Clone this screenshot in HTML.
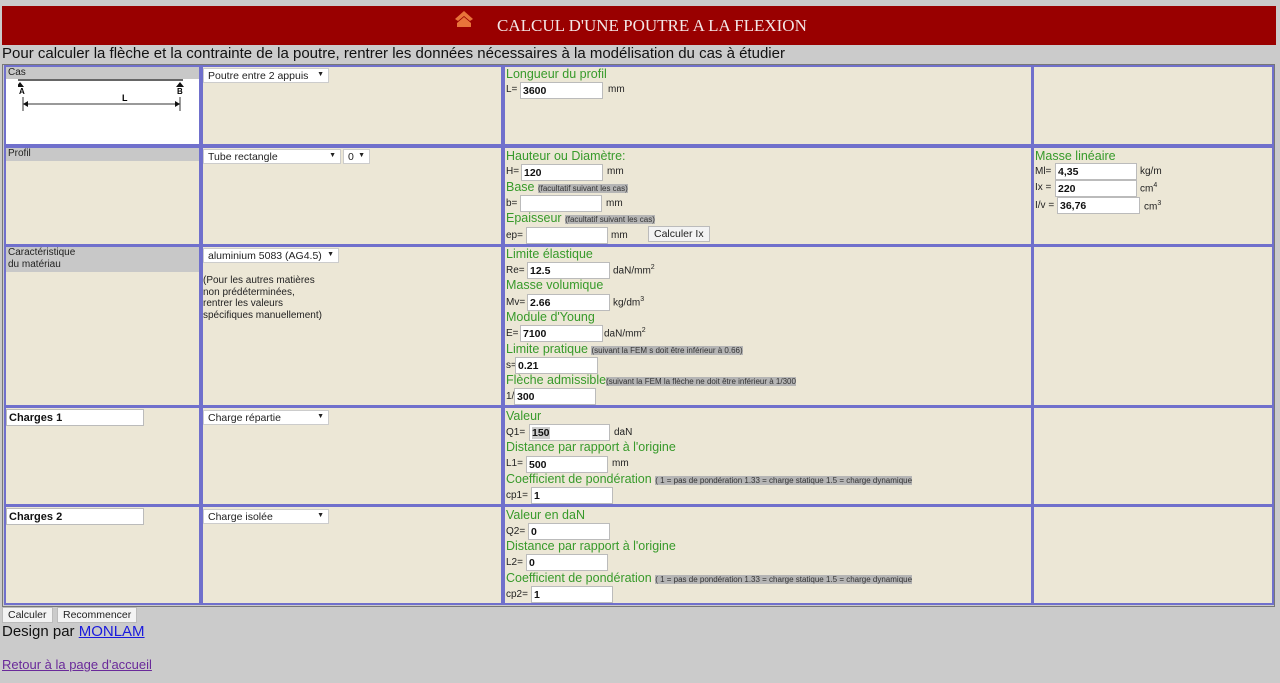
<!DOCTYPE html>
<html><head><meta charset="utf-8"><style>
*{box-sizing:border-box;margin:0;padding:0}
body{width:1280px;height:683px;background:#cbcbcb;font-family:"Liberation Sans",Arial,sans-serif;position:relative;overflow:hidden}
.a{position:absolute;white-space:nowrap}
.hdr{left:2px;top:6px;width:1274px;height:39px;background:#990000}
.ttl{left:497px;top:16px;font-family:"Liberation Serif",serif;font-size:17px;color:#f3e6e6}
.tbl{left:2px;top:64px;width:1273px;height:543px;border:1px solid #777;background:#cbcbcb}
.c{position:absolute;background:#ece7d6;border:2px solid #7070cc}
.g{font-size:12.5px;color:#379a2a}
.s{font-size:10px;color:#222}
.sm{font-size:8px;background:#b5b5b5;color:#333}
.in{position:absolute;height:17px;background:#fff;border:1px solid #bbb;font-size:10.5px;font-weight:bold;padding:2px 2px;color:#111}
.sel{position:absolute;height:15px;background:#fff;border:1px solid #ccc;font-size:10.5px;padding:1px 4px;color:#222}
.sel:after{content:"▼";position:absolute;right:4px;top:2px;font-size:7px}
.gl{position:absolute;background:#c8c8c8;font-size:10px;color:#222;padding-left:2px}
.btn{position:absolute;background:#f3f3f3;border:1px solid #bbb;font-size:10.5px;padding:1px 5px;color:#222}
sup{font-size:7px}
</style></head><body>
<div class="a hdr"></div>
<svg class="a" style="left:453px;top:9px" width="22" height="20" viewBox="0 0 22 20"><path d="M2 10 L11 2 L20 10 L17 12 L11 7 L5 12Z M4 14 L11 8 L18 14 L18 18 L4 18Z" fill="#e8743a"/></svg>
<div class="a ttl">CALCUL D'UNE POUTRE A LA FLEXION</div>
<div class="a" style="left:2px;top:45px;font-size:15px;color:#111">Pour calculer la flèche et la contrainte de la poutre, rentrer les données nécessaires à la modélisation du cas à étudier</div>
<div class="a tbl"></div>

<!-- row1 -->
<div class="c" style="left:4px;top:65px;width:197px;height:81px;background:#fff"></div>
<div class="gl" style="left:6px;top:67px;width:193px;height:12px">Cas</div>
<svg class="a" style="left:18px;top:79px" width="170" height="36"><line x1="0" y1="1" x2="165" y2="1" stroke="#666" stroke-width="2"/><path d="M2 3 L6 8 L-2 8Z M162 3 L166 8 L158 8Z" fill="#111"/><text x="1" y="15" font-size="8" font-weight="bold" font-family="Liberation Sans">A</text><text x="159" y="15" font-size="8" font-weight="bold" font-family="Liberation Sans">B</text><text x="104" y="22" font-size="9" font-weight="bold" font-family="Liberation Sans">L</text><line x1="5" y1="25" x2="162" y2="25" stroke="#333"/><line x1="5" y1="18" x2="5" y2="32" stroke="#333"/><line x1="162" y1="18" x2="162" y2="32" stroke="#333"/><path d="M5 25 L10 22 L10 28Z M162 25 L157 22 L157 28Z" fill="#111"/></svg>
<div class="c" style="left:201px;top:65px;width:302px;height:81px"></div>
<div class="sel" style="left:203px;top:68px;width:126px">Poutre entre 2 appuis</div>
<div class="c" style="left:503px;top:65px;width:530px;height:81px"></div>
<div class="c" style="left:1032px;top:65px;width:242px;height:81px"></div>
<div class="a g" style="left:506px;top:67px">Longueur du profil</div>
<div class="a s" style="left:506px;top:84px">L=</div><div class="in" style="left:520px;top:82px;width:83px">3600</div><div class="a s" style="left:608px;top:84px">mm</div>

<!-- row2 -->
<div class="c" style="left:4px;top:146px;width:197px;height:100px"></div>
<div class="gl" style="left:6px;top:148px;width:193px;height:13px">Profil</div>
<div class="c" style="left:201px;top:146px;width:302px;height:100px"></div>
<div class="sel" style="left:203px;top:149px;width:138px">Tube rectangle</div>
<div class="sel" style="left:343px;top:149px;width:27px">0</div>
<div class="c" style="left:503px;top:146px;width:530px;height:100px"></div>
<div class="a g" style="left:506px;top:149px">Hauteur ou Diamètre:</div>
<div class="a s" style="left:506px;top:166px">H=</div><div class="in" style="left:521px;top:164px;width:82px">120</div><div class="a s" style="left:607px;top:166px">mm</div>
<div class="a g" style="left:506px;top:180px">Base <span class="sm">(facultatif suivant les cas)</span></div>
<div class="a s" style="left:506px;top:198px">b=</div><div class="in" style="left:520px;top:195px;width:82px"></div><div class="a s" style="left:606px;top:198px">mm</div>
<div class="a g" style="left:506px;top:211px">Epaisseur <span class="sm">(facultatif suivant les cas)</span></div>
<div class="a s" style="left:506px;top:230px">ep=</div><div class="in" style="left:526px;top:227px;width:82px"></div><div class="a s" style="left:611px;top:230px">mm</div>
<div class="btn" style="left:648px;top:226px">Calculer Ix</div>
<div class="c" style="left:1032px;top:146px;width:242px;height:100px"></div>
<div class="a g" style="left:1035px;top:149px">Masse linéaire</div>
<div class="a s" style="left:1035px;top:166px">Ml=</div><div class="in" style="left:1055px;top:163px;width:82px">4,35</div><div class="a s" style="left:1140px;top:166px">kg/m</div>
<div class="a s" style="left:1035px;top:182px">Ix =</div><div class="in" style="left:1055px;top:180px;width:82px">220</div><div class="a s" style="left:1140px;top:182px">cm<sup>4</sup></div>
<div class="a s" style="left:1035px;top:200px">I/v =</div><div class="in" style="left:1057px;top:197px;width:83px">36,76</div><div class="a s" style="left:1144px;top:200px">cm<sup>3</sup></div>

<!-- row3 -->
<div class="c" style="left:4px;top:245px;width:197px;height:162px"></div>
<div class="gl" style="left:6px;top:247px;width:193px;height:25px;line-height:12px">Caractéristique<br>du matériau</div>
<div class="c" style="left:201px;top:245px;width:302px;height:162px"></div>
<div class="sel" style="left:203px;top:248px;width:136px">aluminium 5083 (AG4.5)</div>
<div class="a s" style="left:203px;top:275px;line-height:11.5px">(Pour les autres matières<br>non prédéterminées,<br>rentrer les valeurs<br>spécifiques manuellement)</div>
<div class="c" style="left:503px;top:245px;width:530px;height:162px"></div>
<div class="a g" style="left:506px;top:247px">Limite élastique</div>
<div class="a s" style="left:506px;top:265px">Re=</div><div class="in" style="left:527px;top:262px;width:83px">12.5</div><div class="a s" style="left:613px;top:264px">daN/mm<sup>2</sup></div>
<div class="a g" style="left:506px;top:278px">Masse volumique</div>
<div class="a s" style="left:506px;top:297px">Mv=</div><div class="in" style="left:527px;top:294px;width:83px">2.66</div><div class="a s" style="left:613px;top:296px">kg/dm<sup>3</sup></div>
<div class="a g" style="left:506px;top:310px">Module d'Young</div>
<div class="a s" style="left:506px;top:328px">E=</div><div class="in" style="left:520px;top:325px;width:83px">7100</div><div class="a s" style="left:604px;top:327px">daN/mm<sup>2</sup></div>
<div class="a g" style="left:506px;top:342px">Limite pratique <span class="sm">(suivant la FEM s doit être inférieur à 0.66)</span></div>
<div class="a s" style="left:506px;top:360px">s=</div><div class="in" style="left:515px;top:357px;width:83px">0.21</div>
<div class="a g" style="left:506px;top:373px">Flèche admissible<span class="sm">(suivant la FEM la flèche ne doit être inférieur à 1/300</span></div>
<div class="a s" style="left:506px;top:391px">1/</div><div class="in" style="left:514px;top:388px;width:82px">300</div>
<div class="c" style="left:1032px;top:245px;width:242px;height:162px"></div>

<!-- row4 -->
<div class="c" style="left:4px;top:406px;width:197px;height:100px"></div>
<div class="in" style="left:6px;top:409px;width:138px;font-size:11px">Charges 1</div>
<div class="c" style="left:201px;top:406px;width:302px;height:100px"></div>
<div class="sel" style="left:203px;top:410px;width:126px">Charge répartie</div>
<div class="c" style="left:503px;top:406px;width:530px;height:100px"></div>
<div class="a g" style="left:506px;top:409px">Valeur</div>
<div class="a s" style="left:506px;top:427px">Q1=</div><div class="in" style="left:529px;top:424px;width:81px"><span style="background:#ccc">150</span></div><div class="a s" style="left:614px;top:427px">daN</div>
<div class="a g" style="left:506px;top:440px">Distance par rapport à l'origine</div>
<div class="a s" style="left:506px;top:458px">L1=</div><div class="in" style="left:526px;top:456px;width:82px">500</div><div class="a s" style="left:612px;top:458px">mm</div>
<div class="a g" style="left:506px;top:472px">Coefficient de pondération <span class="sm">( 1 = pas de pondération 1.33 = charge statique 1.5 = charge dynamique</span></div>
<div class="a s" style="left:506px;top:490px">cp1=</div><div class="in" style="left:531px;top:487px;width:82px">1</div>
<div class="c" style="left:1032px;top:406px;width:242px;height:100px"></div>

<!-- row5 -->
<div class="c" style="left:4px;top:505px;width:197px;height:100px"></div>
<div class="in" style="left:6px;top:508px;width:138px;font-size:11px">Charges 2</div>
<div class="c" style="left:201px;top:505px;width:302px;height:100px"></div>
<div class="sel" style="left:203px;top:509px;width:126px">Charge isolée</div>
<div class="c" style="left:503px;top:505px;width:530px;height:100px"></div>
<div class="a g" style="left:506px;top:508px">Valeur en daN</div>
<div class="a s" style="left:506px;top:526px">Q2=</div><div class="in" style="left:528px;top:523px;width:82px">0</div>
<div class="a g" style="left:506px;top:539px">Distance par rapport à l'origine</div>
<div class="a s" style="left:506px;top:557px">L2=</div><div class="in" style="left:526px;top:554px;width:82px">0</div>
<div class="a g" style="left:506px;top:571px">Coefficient de pondération <span class="sm">( 1 = pas de pondération 1.33 = charge statique 1.5 = charge dynamique</span></div>
<div class="a s" style="left:506px;top:589px">cp2=</div><div class="in" style="left:531px;top:586px;width:82px">1</div>
<div class="c" style="left:1032px;top:505px;width:242px;height:100px"></div>

<div class="btn" style="left:2px;top:607px">Calculer</div>
<div class="btn" style="left:57px;top:607px">Recommencer</div>
<div class="a" style="left:2px;top:623px;font-size:15px;color:#111">Design par <span style="color:#1a1add;text-decoration:underline">MONLAM</span></div>
<div class="a" style="left:2px;top:657px;font-size:13px;color:#6a2a9a;text-decoration:underline">Retour à la page d'accueil</div>
</body></html>
